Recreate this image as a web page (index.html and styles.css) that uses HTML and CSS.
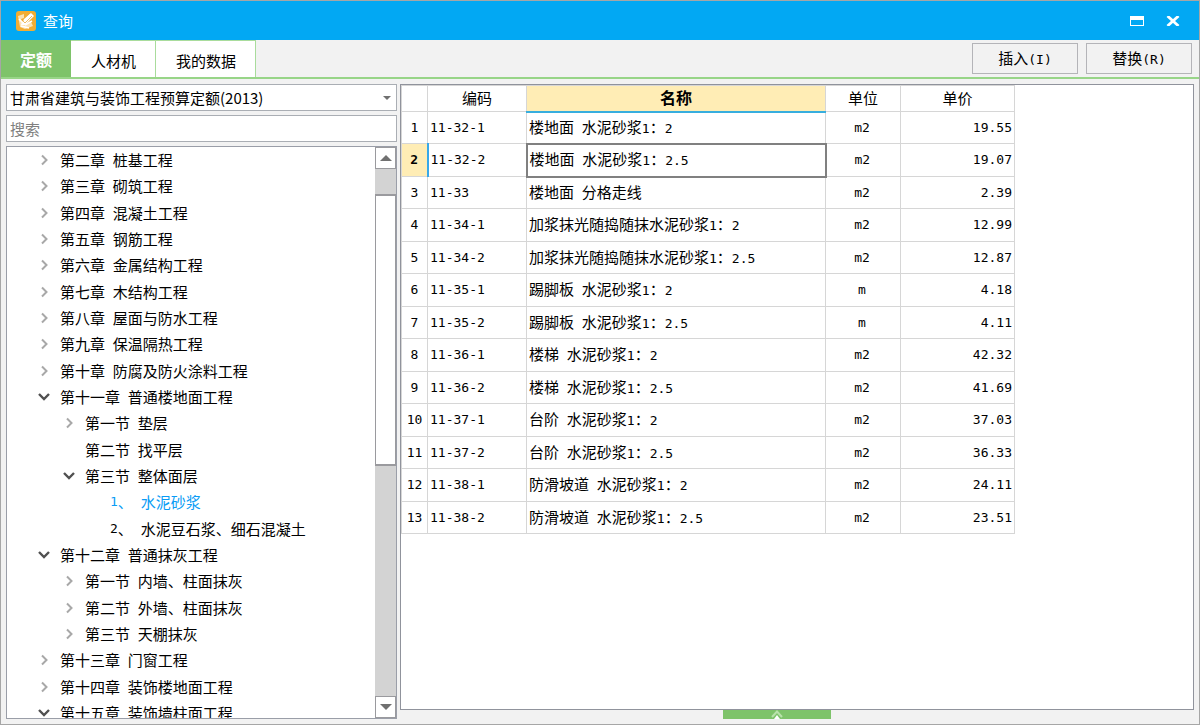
FILE: index.html
```html
<!DOCTYPE html>
<html lang="zh-CN">
<head>
<meta charset="utf-8">
<title>查询</title>
<link rel="stylesheet" href="styles.css">
</head>
<body>
<svg class="defs" aria-hidden="true">
  <symbol id="closed" viewBox="0 0 12 12"><path d="M4 1.5 8.5 6 4 10.5" fill="none" stroke="#a8a8a8" stroke-width="2"/></symbol>
  <symbol id="open" viewBox="0 0 12 12"><path d="M1 3 6 8 11 3" fill="none" stroke="#505050" stroke-width="2.4"/></symbol>
</svg>
<div class="window">
  <header class="titlebar">
    <svg class="logo" viewBox="0 0 20 20" aria-hidden="true">
      <rect width="20" height="20" rx="3" fill="#f2ad32"/>
      <path d="M2 5 8 3 8 7 5 8 7 13 15 11 17 15 9 18 4 16Z" fill="#fbe3b4"/>
      <path d="M6 11 15 2 18 5 9 14 5 14Z" fill="#fff"/>
      <path d="M3 8 8 13M8 9 15 3M9 14 16 10M5 15 13 17" fill="none" stroke="#fff" stroke-width="1.6"/>
      <path d="M7 10 9 12 16 5" fill="none" stroke="#eebc62" stroke-width="1"/>
    </svg>
    <h1 class="title">查询</h1>
    <button class="winbtn" aria-label="最大化"><svg viewBox="0 0 14 10" width="14" height="10"><path d="M0 0H14V10H0ZM1 4V9H13V4Z" fill="#fff" fill-rule="evenodd"/></svg></button>
    <button class="winbtn" aria-label="关闭"><svg viewBox="0 0 14 10" width="14" height="10"><path d="M1.5 0 12.5 10M12.5 0 1.5 10" stroke="#fff" stroke-width="2.8"/></svg></button>
  </header>
  <nav class="tabs">
    <button class="tab active">定额</button>
    <button class="tab">人材机</button>
    <button class="tab">我的数据</button>
    <div class="actions">
      <button class="action">插入<span class="n">(I)</span></button>
      <button class="action">替换<span class="n">(R)</span></button>
    </div>
  </nav>
  <main class="main">
    <section class="side">
      <div class="combo">
        <select class="field" aria-label="定额库"><option>甘肃省建筑与装饰工程预算定额(2013)</option></select>
        <svg class="combo-arrow" viewBox="0 0 8 4" aria-hidden="true"><path d="M0 0H8L4 4Z" fill="#707070"/></svg>
      </div>
      <input class="field" type="text" placeholder="搜索" aria-label="搜索">
      <div class="tree">
        <ul class="list">
          <li class="node"><svg class="arrow"><use href="#closed"/></svg>第二章<span class="n"> </span>桩基工程</li>
          <li class="node"><svg class="arrow"><use href="#closed"/></svg>第三章<span class="n"> </span>砌筑工程</li>
          <li class="node"><svg class="arrow"><use href="#closed"/></svg>第四章<span class="n"> </span>混凝土工程</li>
          <li class="node"><svg class="arrow"><use href="#closed"/></svg>第五章<span class="n"> </span>钢筋工程</li>
          <li class="node"><svg class="arrow"><use href="#closed"/></svg>第六章<span class="n"> </span>金属结构工程</li>
          <li class="node"><svg class="arrow"><use href="#closed"/></svg>第七章<span class="n"> </span>木结构工程</li>
          <li class="node"><svg class="arrow"><use href="#closed"/></svg>第八章<span class="n"> </span>屋面与防水工程</li>
          <li class="node"><svg class="arrow"><use href="#closed"/></svg>第九章<span class="n"> </span>保温隔热工程</li>
          <li class="node"><svg class="arrow"><use href="#closed"/></svg>第十章<span class="n"> </span>防腐及防火涂料工程</li>
          <li class="node"><svg class="arrow"><use href="#open"/></svg>第十一章<span class="n"> </span>普通楼地面工程</li>
          <li class="node level2"><svg class="arrow"><use href="#closed"/></svg>第一节<span class="n"> </span>垫层</li>
          <li class="node level2"><svg class="arrow"></svg>第二节<span class="n"> </span>找平层</li>
          <li class="node level2"><svg class="arrow"><use href="#open"/></svg>第三节<span class="n"> </span>整体面层</li>
          <li class="node level3 current"><svg class="arrow"></svg><span class="n">1</span>、<span class="n"> </span>水泥砂浆</li>
          <li class="node level3"><svg class="arrow"></svg><span class="n">2</span>、<span class="n"> </span>水泥豆石浆、细石混凝土</li>
          <li class="node"><svg class="arrow"><use href="#open"/></svg>第十二章<span class="n"> </span>普通抹灰工程</li>
          <li class="node level2"><svg class="arrow"><use href="#closed"/></svg>第一节<span class="n"> </span>内墙、柱面抹灰</li>
          <li class="node level2"><svg class="arrow"><use href="#closed"/></svg>第二节<span class="n"> </span>外墙、柱面抹灰</li>
          <li class="node level2"><svg class="arrow"><use href="#closed"/></svg>第三节<span class="n"> </span>天棚抹灰</li>
          <li class="node"><svg class="arrow"><use href="#closed"/></svg>第十三章<span class="n"> </span>门窗工程</li>
          <li class="node"><svg class="arrow"><use href="#closed"/></svg>第十四章<span class="n"> </span>装饰楼地面工程</li>
          <li class="node"><svg class="arrow"><use href="#open"/></svg>第十五章<span class="n"> </span>装饰墙柱面工程</li>
        </ul>
        <div class="scroll">
          <button class="step" aria-label="向上"><svg viewBox="0 0 12 6" width="12" height="6"><path d="M0 6H12L6 0Z" fill="#707070"/></svg></button>
          <div class="before"></div>
          <div class="thumb"></div>
          <div class="after"></div>
          <button class="step" aria-label="向下"><svg viewBox="0 0 12 6" width="12" height="6"><path d="M0 0H12L6 6Z" fill="#707070"/></svg></button>
        </div>
      </div>
    </section>
    <section class="content">
      <div class="sheet">
        <table class="grid">
          <colgroup><col class="c-no"><col class="c-code"><col class="c-name"><col class="c-unit"><col class="c-price"></colgroup>
          <thead><tr><th></th><th>编码</th><th class="sorted">名称</th><th>单位</th><th>单价</th></tr></thead>
          <tbody>
            <tr><td>1</td><td>11-32-1</td><td>楼地面<span class="n"> </span>水泥砂浆<span class="n">1</span>：<span class="n">2</span></td><td>m2</td><td>19.55</td></tr>
            <tr class="selected"><td>2</td><td>11-32-2</td><td>楼地面<span class="n"> </span>水泥砂浆<span class="n">1</span>：<span class="n">2.5</span></td><td>m2</td><td>19.07</td></tr>
            <tr><td>3</td><td>11-33</td><td>楼地面<span class="n"> </span>分格走线</td><td>m2</td><td>2.39</td></tr>
            <tr><td>4</td><td>11-34-1</td><td>加浆抹光随捣随抹水泥砂浆<span class="n">1</span>：<span class="n">2</span></td><td>m2</td><td>12.99</td></tr>
            <tr><td>5</td><td>11-34-2</td><td>加浆抹光随捣随抹水泥砂浆<span class="n">1</span>：<span class="n">2.5</span></td><td>m2</td><td>12.87</td></tr>
            <tr><td>6</td><td>11-35-1</td><td>踢脚板<span class="n"> </span>水泥砂浆<span class="n">1</span>：<span class="n">2</span></td><td>m</td><td>4.18</td></tr>
            <tr><td>7</td><td>11-35-2</td><td>踢脚板<span class="n"> </span>水泥砂浆<span class="n">1</span>：<span class="n">2.5</span></td><td>m</td><td>4.11</td></tr>
            <tr><td>8</td><td>11-36-1</td><td>楼梯<span class="n"> </span>水泥砂浆<span class="n">1</span>：<span class="n">2</span></td><td>m2</td><td>42.32</td></tr>
            <tr><td>9</td><td>11-36-2</td><td>楼梯<span class="n"> </span>水泥砂浆<span class="n">1</span>：<span class="n">2.5</span></td><td>m2</td><td>41.69</td></tr>
            <tr><td>10</td><td>11-37-1</td><td>台阶<span class="n"> </span>水泥砂浆<span class="n">1</span>：<span class="n">2</span></td><td>m2</td><td>37.03</td></tr>
            <tr><td>11</td><td>11-37-2</td><td>台阶<span class="n"> </span>水泥砂浆<span class="n">1</span>：<span class="n">2.5</span></td><td>m2</td><td>36.33</td></tr>
            <tr><td>12</td><td>11-38-1</td><td>防滑坡道<span class="n"> </span>水泥砂浆<span class="n">1</span>：<span class="n">2</span></td><td>m2</td><td>24.11</td></tr>
            <tr><td>13</td><td>11-38-2</td><td>防滑坡道<span class="n"> </span>水泥砂浆<span class="n">1</span>：<span class="n">2.5</span></td><td>m2</td><td>23.51</td></tr>
          </tbody>
        </table>
      </div>
      <div class="drawer">
        <button class="handle" aria-label="展开"><svg viewBox="0 0 12 9" width="12" height="9"><path d="M3 9 6 5 9 9Z" fill="#fff"/><path d="M1 7 6 1.5 11 7" fill="none" stroke="#b9e2ab" stroke-width="2"/></svg></button>
      </div>
    </section>
  </main>
</div>
</body>
</html>
```
FILE: styles.css
```css
* { box-sizing: border-box; }

body {
  margin: 0;
  background: #f2f2f2;
  color: #000;
  font: 15px/20px "Noto Sans CJK SC", sans-serif;
}

button, input, select { font: inherit; color: inherit; margin: 0; }
button { padding: 0; border: 0; background: none; }

.defs { display: none; }

.n { font-family: "DejaVu Sans Mono", monospace; font-size: 13px; white-space: pre; }

.window {
  display: flex;
  flex-direction: column;
  height: 100vh;
  border: 1px solid #a6a6a6;
}

.titlebar {
  display: flex;
  align-items: center;
  flex: none;
  height: 39px;
  padding: 0 19px 0 15px;
  background: #02a8f3;
  color: #fff;
}
.logo { width: 20px; height: 20px; }
.title { flex: 1; margin: 0 0 0 7px; font-size: 15px; font-weight: 400; }
.winbtn { display: flex; margin-left: 22px; }

.tabs {
  display: flex;
  flex: none;
  height: 39px;
  border-bottom: 2px solid #98d588;
}
.tab {
  padding: 4px 19px 0 20px;
  border-right: 1px solid #a9dc9c;
  border-top: 1px solid #a9dc9c;
  background: #fff;
}
.tab.active {
  padding: 1px 19px 0;
  border: 0;
  background: #7ec36a;
  color: #fff;
  font-size: 16px;
  font-weight: 700;
}

.actions { display: flex; gap: 8px; margin-left: auto; padding: 3px 7px 3px 0; }
.action { width: 106px; border: 1px solid #b4b4b8; background: #f2f2f2; }

.main { display: flex; flex: 1; min-height: 0; gap: 3px; padding: 5px 5px 4px; }

.side {
  display: flex;
  flex-direction: column;
  flex: none;
  gap: 4px;
  width: 391px;
  padding-bottom: 1px;
}
.combo { position: relative; display: flex; }
.combo-arrow { position: absolute; right: 6px; top: 12px; width: 8px; height: 4px; pointer-events: none; }
.field {
  flex: none;
  width: 100%;
  height: 27px;
  padding: 0 3px;
  border: 1px solid #aaaeb4;
  border-radius: 0;
  background: #fff;
  appearance: none;
}
.field::placeholder { color: #808080; }

.tree {
  display: flex;
  flex: 1;
  min-height: 0;
  overflow: hidden;
  border: 1px solid #9a9ea8;
  background: #fff;
}
.list {
  display: grid;
  flex: 1;
  grid-auto-rows: minmax(0, 1fr);
  margin: 0 0 -8px;
  padding: 0;
  list-style: none;
}
.node { display: flex; align-items: center; padding-left: 31px; white-space: nowrap; }
.level2 { padding-left: 56px; }
.level3 { padding-left: 81px; }
.current { color: #0a9cf5; }
.arrow { flex: none; width: 12px; height: 12px; margin-right: 10px; }

.scroll { display: flex; flex-direction: column; width: 21px; background: #d3d3d3; }
.step, .thumb { border: 1px solid #9a9a9e; background: #fff; }
.step { display: flex; align-items: center; justify-content: center; flex: none; height: 22px; }
.before { flex: 25; }
.thumb { flex: 270; border-width: 2px 1px; }
.after { flex: 231; }

.content { display: flex; flex-direction: column; flex: 1; min-width: 0; }
.sheet {
  flex: 1;
  min-height: 0;
  overflow: hidden;
  border: 1px solid #90939c;
  background: #fff;
}

.grid { border-collapse: collapse; table-layout: fixed; width: 613px; }
.c-no { width: 26px; }
.c-code { width: 99px; }
.c-name { width: 299px; }
.c-unit { width: 75px; }
.c-price { width: 114px; }
.grid th, .grid td { padding: 0; border: 1px solid #d6d6d6; white-space: nowrap; }
.grid th { height: 26px; padding-bottom: 2px; font-weight: 400; }
.grid th.sorted {
  border-bottom: 2px solid #38aede;
  background: #ffedb5;
  font-size: 16px;
  font-weight: 700;
}
.grid td {
  height: 32px;
  font-family: "DejaVu Sans Mono", monospace;
  font-size: 13px;
  text-align: center;
}
.grid tr:nth-child(even) td { height: 33px; }
.grid td:nth-child(2) { padding-left: 2px; text-align: left; }
.grid td:nth-child(3) {
  padding-left: 2px;
  font-family: "Noto Sans CJK SC", sans-serif;
  font-size: 15px;
  text-align: left;
}
.grid td:nth-child(4) { padding-right: 2px; }
.grid td:nth-child(5) { padding-right: 2px; text-align: right; }
.selected td:first-child { border-right: 2px solid #38a8e8; background: #ffedb5; font-weight: 700; }
.grid .selected td:nth-child(3) { border: 2px solid #808080; }

.drawer { display: flex; flex: none; height: 10px; }
.drawer::before { content: ""; flex: 8; }
.drawer::after { content: ""; flex: 9; }
.handle { display: flex; justify-content: center; width: 108px; height: 9px; background: #7ec36a; }
```
